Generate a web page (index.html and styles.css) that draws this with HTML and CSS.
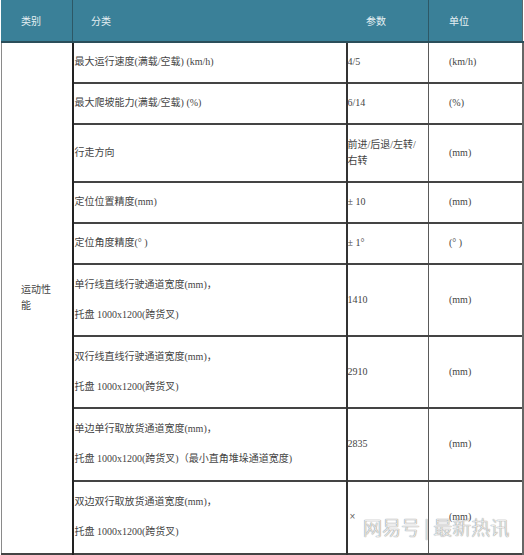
FILE: index.html
```html
<!DOCTYPE html>
<html lang="zh">
<head>
<meta charset="utf-8">
<link rel="stylesheet" href="styles.css">
</head>
<body>
<div class="wrap">
<table class="spec">
  <colgroup>
    <col class="c1"><col class="c2"><col class="c3"><col class="c4">
  </colgroup>
  <thead>
    <tr class="head">
      <th class="h1">类别</th>
      <th class="h2">分类</th>
      <th class="h3">参数</th>
      <th class="h4">单位</th>
    </tr>
  </thead>
  <tbody>
    <tr class="r41">
      <td class="cat" rowspan="9">运动性能</td>
      <td class="name">最大运行速度(满载/空载) (km/h)</td>
      <td class="val">4/5</td>
      <td class="unit">(km/h)</td>
    </tr>
    <tr class="r41">
      <td class="name">最大爬坡能力(满载/空载) (%)</td>
      <td class="val">6/14</td>
      <td class="unit">(%)</td>
    </tr>
    <tr class="r58">
      <td class="name">行走方向</td>
      <td class="val">前进/后退/左转/<br>右转</td>
      <td class="unit">(mm)</td>
    </tr>
    <tr class="r41">
      <td class="name">定位位置精度(mm)</td>
      <td class="val">± 10</td>
      <td class="unit">(mm)</td>
    </tr>
    <tr class="r41">
      <td class="name">定位角度精度(° )</td>
      <td class="val">± 1°</td>
      <td class="unit">(° )</td>
    </tr>
    <tr class="r72">
      <td class="name two">单行线直线行驶通道宽度(mm)，<br>托盘 1000x1200(跨货叉)</td>
      <td class="val">1410</td>
      <td class="unit">(mm)</td>
    </tr>
    <tr class="r72">
      <td class="name two">双行线直线行驶通道宽度(mm)，<br>托盘 1000x1200(跨货叉)</td>
      <td class="val">2910</td>
      <td class="unit">(mm)</td>
    </tr>
    <tr class="r73">
      <td class="name two">单边单行取放货通道宽度(mm)，<br>托盘 1000x1200(跨货叉)（最小直角堆垛通道宽度)</td>
      <td class="val">2835</td>
      <td class="unit">(mm)</td>
    </tr>
    <tr class="r73">
      <td class="name two">双边双行取放货通道宽度(mm)，<br>托盘 1000x1200(跨货叉)</td>
      <td class="val"><span class="times">×</span></td>
      <td class="unit">(mm)</td>
    </tr>
  </tbody>
</table>
<div class="mark">网易号 | 最新热讯</div>
</div>
</body>
</html>
```

FILE: styles.css
```css
html, body {
  margin: 0;
  padding: 0;
  background: #fff;
}
.wrap {
  position: relative;
  width: 524px;
  height: 555px;
  overflow: hidden;
}
.spec {
  margin-left: 1px;
  width: 521px;
  border-collapse: collapse;
  table-layout: fixed;
  font-family: "Liberation Serif", "Noto Sans CJK SC", serif;
  font-size: 10px;
  color: #444;
}
.c1 { width: 71px; }
.c2 { width: 274px; }
.c3 { width: 82px; }
.c4 { width: 94px; }
.head {
  height: 41px;
  background: #3a8098;
}
.head th {
  font-weight: normal;
  color: #e6f0f3;
  text-align: left;
  border: 1px solid #3a8098;
  border-bottom: 2px solid #2b4e5a;
  padding: 0;
}
.head .h1 { padding-left: 19px; border-right: 1px solid #2d5866; }
.head .h2 { padding-left: 18px; }
.head .h3 { padding-left: 19px; border-left: 1px solid #2d5866; border-right: 1px solid #2d5866; }
.head .h4 { padding-left: 20px; border-right: 1px solid #5a6a70; }
td {
  border: 1px solid #5a5a5a;
  padding: 0;
  vertical-align: middle;
  line-height: 16px;
}
td.cat {
  padding: 0 18px 0 19px;
  border-left: 1px solid #8a8a8a;
  border-right: 2px solid #222;
}
td.name { padding-left: 1px; }
td.val { padding-left: 0; border-left: 2px solid #333; }
td.unit { padding-left: 20px; border-left: 1px solid #777; border-right: 2px solid #666; }
td.two { line-height: 30px; }
.times {
  font-family: "Liberation Sans", sans-serif;
  color: #666;
  font-size: 10px;
  padding-left: 2px;
}
tr.r41 { height: 41px; }
tr.r58 { height: 58px; }
tr.r72 { height: 72px; }
tr.r73 { height: 73px; }
tbody tr { border-bottom: 2px solid #444; }
.mark {
  position: absolute;
  left: 363px;
  top: 513px;
  font-family: "Noto Sans CJK SC", sans-serif;
  font-weight: 300;
  font-size: 19px;
  color: rgba(255, 255, 255, 0.85);
  text-shadow: 0 0 1px #888, 0 0 1px #888;
  white-space: nowrap;
}
```
